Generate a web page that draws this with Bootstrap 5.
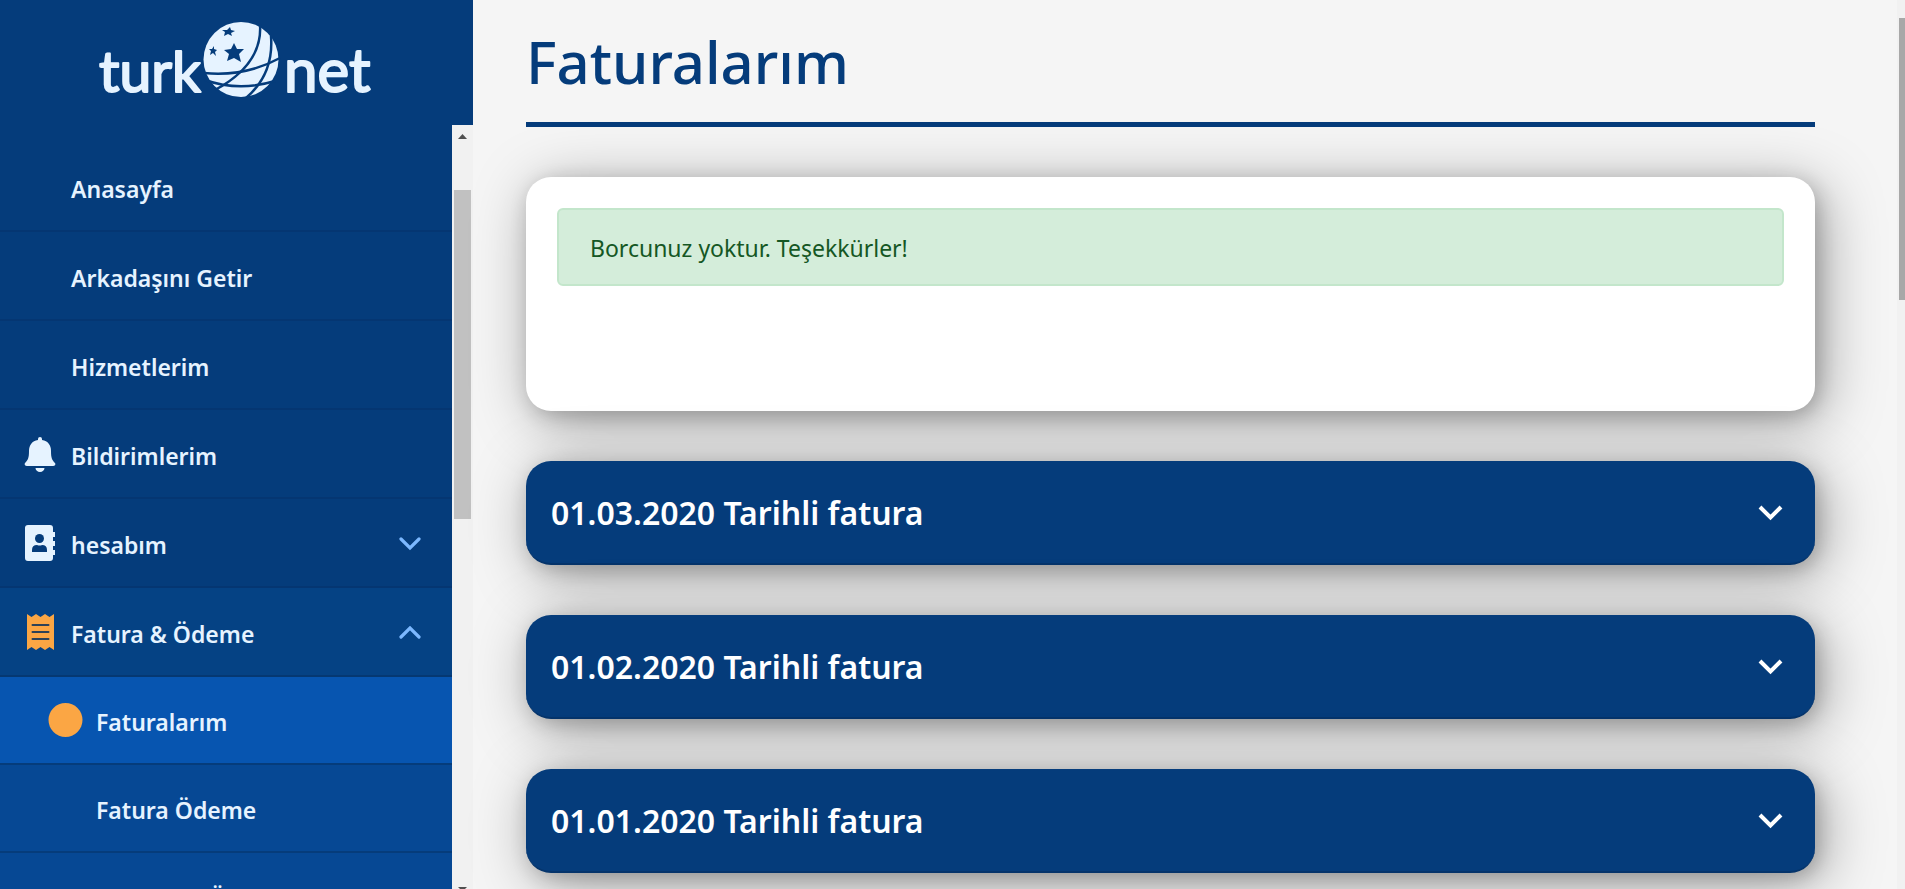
<!DOCTYPE html>
<html lang="tr">
<head>
<meta charset="utf-8">
<meta name="viewport" content="width=device-width, initial-scale=1">
<title>Faturalarım</title>
<link href="https://cdn.jsdelivr.net/npm/bootstrap@5.3.0/dist/css/bootstrap.min.css" rel="stylesheet">
<style>
:root { --navy: #053c7b; --ice: #e6f3ff; --amber: #fba644; }
body { font-family: "Noto Sans", "Open Sans", sans-serif; background: #f5f5f5; }
.side { width: 473px; }
.side-head { background: var(--navy); height: 125px; }
.side-list { background: var(--navy); padding-top: 18px; }
.side-link { height: 89px; border-bottom: 2px solid #053672; color: var(--ice); font-size: 23px; font-weight: 600; line-height: 32px; padding: 4px 30px 0 24px; text-decoration: none; }
.side-link .slot { width: 33px; height: 36px; margin-right: 14px; margin-top: -4px; }
.side-link:hover { color: #fff; }
.side-link.opened { background: #054284; border-color: #053872; }
.side-sub .side-link { height: 88px; background: #064894; border-color: #053c7b; padding-left: 48px; }
.side-sub .side-link.current { background: #0755b0; }
.side-sub .slot { width: 35px; margin-right: 13px; }
.rail { width: 21px; background: #f1f1f1; }
.rail-thumb { width: 17px; height: 329px; margin-top: 44px; background: #c1c1c1; }
.page-rail { width: 8px; background: #f1f1f1; }
.page-rail-thumb { width: 6px; height: 282px; margin-top: 18px; background: #a8a8a8; }
.content { padding: 18px 82px 0 53px; }
.title-bar { color: var(--navy); font-size: 58px; font-weight: 500; line-height: 88px; padding-bottom: 16px; border-bottom: 5px solid var(--navy); }
.panel, .bill { border-radius: 25px; box-shadow: 4px 5px 20px rgba(0,0,0,.2), 8px 10px 60px rgba(0,0,0,.35); }
.panel { background: #fff; min-height: 234px; padding: 31px; }
.debt { height: 78px; padding: 2px 31px 0; border: 2px solid #c3e6cb; border-radius: 6px; background: #d4edda; color: #155724; font-size: 23px; }
.bill { height: 104px; background: var(--navy); color: #fff; border: 0; border-bottom: 2px solid #05346b; font-size: 32px; font-weight: 600; padding: 2px 32px 0 25px; }
.stack { gap: 50px; padding-top: 50px; }
</style>
</head>
<body class="vh-100 overflow-hidden d-flex">
<aside class="side d-flex flex-column flex-shrink-0 h-100">
  <div class="side-head flex-shrink-0">
    <a href="#" aria-label="turknet">
    <svg width="473" height="125" viewBox="0 0 473 125">
      <g fill="#e6f3ff" stroke="#e6f3ff" stroke-width="2" stroke-linejoin="round" font-family="Lato, sans-serif">
        <text x="99" y="92" font-size="57">turk</text><text x="284" y="92" font-size="60">net</text>
      </g>
      <circle cx="241" cy="59.500" r="37.500" fill="#e6f3ff"/>
      <g fill="none" stroke="#053c7b" stroke-width="2.500">
        <path d="M204 73Q245 77 280 58"/><path d="M205 80Q239 92 275 81"/>
        <path d="M260 24Q263 64 215 90"/><path d="M271 36Q274 74 246 98"/>
      </g>
      <g fill="#053c7b">
        <path d="M234 43L237 49L244 49L239 54L241 62L234 58L227 61L229 54L224 50L231 49Z"/>
        <path d="M230 27L231 30L235 31L231 33L232 36L228 34L224 36L225 32L222 30L227 30Z"/>
        <path d="M214 46L214 49L217 50L215 52L216 56L213 53L210 55L211 51L209 49L212 49Z"/>
      </g>
    </svg></a>
  </div>
  <div class="d-flex flex-grow-1 overflow-hidden">
    <nav class="side-list flex-grow-1">
      <a href="#" class="side-link d-flex align-items-center"><span class="slot"></span>Anasayfa</a>
      <a href="#" class="side-link d-flex align-items-center"><span class="slot"></span>Arkadaşını Getir</a>
      <a href="#" class="side-link d-flex align-items-center"><span class="slot"></span>Hizmetlerim</a>
      <a href="#" class="side-link d-flex align-items-center">
        <svg class="slot" viewBox="0 0 33 36" fill="#e6f3ff"><path d="M14 3a2 2 0 0 1 4 0v1c6 1 9 5 9 11c0 7 1 9 4 12c1 1 0 3-2 3H3c-2 0-3-2-2-3c3-3 4-5 4-12C5 9 8 5 14 4zM11.500 32h9a4.500 4 0 0 1-9 0z"/></svg>Bildirimlerim</a>
      <a href="#" class="side-link d-flex align-items-center">
        <svg class="slot" viewBox="0 0 33 36" fill="#e6f3ff"><path d="M4 0h22q3 0 3 3v4h2v5h-2v4h2v5h-2v4h2v5h-2v3q0 3-3 3H4q-3 0-3-3V3q0-3 3-3z"/><circle cx="15.500" cy="13.500" r="4.500" fill="#053c7b"/><path d="M8 27v-2q0-5 5-5q3 1 5 0q5 0 5 5v2z" fill="#053c7b"/></svg>hesabım
        <svg class="ms-auto" width="24" height="16" viewBox="0 0 24 16" fill="none" stroke="#7cb8ff" stroke-width="3.200" stroke-linecap="round"><path d="M3 2L12 11L21 2"/></svg></a>
      <a href="#" class="side-link opened d-flex align-items-center">
        <svg class="slot" viewBox="0 0 33 36"><path fill="#fba644" d="M3 0l4.500 3L12 0l4.500 3L21 0l4.500 3L30 0v36l-4.500-3L21 36l-4.500-3L12 36l-4.500-3L3 36z"/><path stroke="#2d4258" stroke-width="2" stroke-linecap="round" d="M8.500 11h16M8.500 18h16M8.500 25h16"/></svg>Fatura &amp; Ödeme
        <svg class="ms-auto" width="24" height="16" viewBox="0 0 24 16" fill="none" stroke="#7cb8ff" stroke-width="3.200" stroke-linecap="round"><path d="M3 11L12 2L21 11"/></svg></a>
      <div class="side-sub">
        <a href="#" class="side-link current d-flex align-items-center"><svg class="slot" viewBox="0 0 35 36"><circle cx="17.500" cy="18" r="17" fill="#fba644"/></svg>Faturalarım</a>
        <a href="#" class="side-link d-flex align-items-center"><span class="slot"></span>Fatura Ödeme</a>
        <a href="#" class="side-link d-flex align-items-center"><span class="slot"></span>Otomatik Ödeme</a>
      </div>
    </nav>
    <div class="rail d-flex flex-column align-items-center flex-shrink-0" aria-hidden="true">
      <svg class="flex-shrink-0" width="21" height="21" viewBox="0 0 21 21"><path fill="#505050" d="M6 14L10.500 9L15 14z"/></svg>
      <div class="rail-thumb flex-shrink-0"></div>
      <svg class="mt-auto flex-shrink-0" width="21" height="3" viewBox="0 0 21 3"><path fill="#505050" d="M6 1h9l-2 2h-5z"/></svg>
    </div>
  </div>
</aside>
<main class="content flex-grow-1">
  <h1 class="title-bar mb-0">Faturalarım</h1>
  <div class="stack d-flex flex-column">
    <section class="panel"><div class="debt d-flex align-items-center" role="alert">Borcunuz yoktur. Teşekkürler!</div></section>
    <button type="button" class="bill d-flex align-items-center justify-content-between">01.03.2020 Tarihli fatura<svg width="25" height="18" viewBox="0 0 25 18" fill="none" stroke="#fff" stroke-width="4"><path d="M2 3L12.500 13.500L23 3"/></svg></button>
    <button type="button" class="bill d-flex align-items-center justify-content-between">01.02.2020 Tarihli fatura<svg width="25" height="18" viewBox="0 0 25 18" fill="none" stroke="#fff" stroke-width="4"><path d="M2 3L12.500 13.500L23 3"/></svg></button>
    <button type="button" class="bill d-flex align-items-center justify-content-between">01.01.2020 Tarihli fatura<svg width="25" height="18" viewBox="0 0 25 18" fill="none" stroke="#fff" stroke-width="4"><path d="M2 3L12.500 13.500L23 3"/></svg></button>
  </div>
</main>
<div class="page-rail d-flex flex-column align-items-end flex-shrink-0 h-100" aria-hidden="true"><div class="page-rail-thumb"></div></div>
<script src="https://cdn.jsdelivr.net/npm/bootstrap@5.3.0/dist/js/bootstrap.bundle.min.js"></script>
</body>
</html>
